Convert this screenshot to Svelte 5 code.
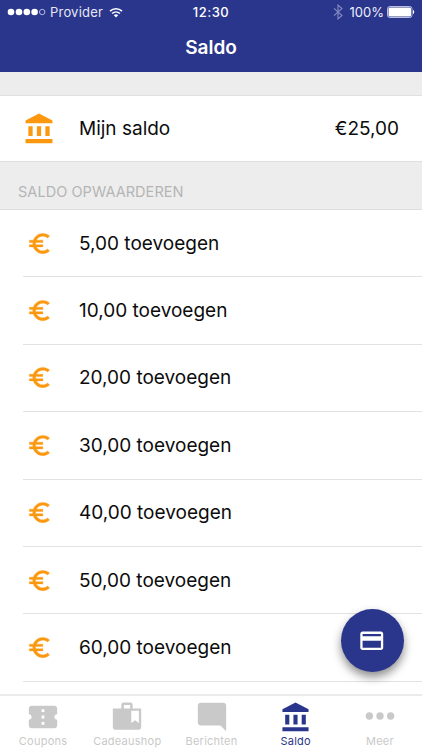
<script>
    let {
        balance = '€25,00',
        amounts = ['5,00', '10,00', '20,00', '30,00', '40,00', '50,00', '60,00'],
        activeTab = 'saldo',
    } = $props();

    const tabs = [
        { id: 'coupons', label: 'Coupons' },
        { id: 'shop', label: 'Cadeaushop' },
        { id: 'messages', label: 'Berichten' },
        { id: 'saldo', label: 'Saldo' },
        { id: 'more', label: 'Meer' },
    ];
</script>

{#snippet bank()}
    <svg class="bank" viewBox="0 0 24 24">
        <path d="M4.5 10v7h3v-7h-3zm6 0v7h3v-7h-3zM2.5 22h19v-3h-19v3zm14-12v7h3v-7h-3zM12 1L2.5 6v2h19V6L12 1z" />
    </svg>
{/snippet}

<div class="app">
    <header>
        <div class="status">
            <div class="carrier">
                <svg class="signal" viewBox="0 0 39 8">
                    {#each [4, 12, 19.8, 27.6] as x}
                        <circle cx={x} cy="4" r="3.3" fill="#fff" />
                    {/each}
                    <circle cx="35.2" cy="4" r="2.7" fill="none" stroke="#c3c6e6" stroke-width="0.9" />
                </svg>
                <span class="provider">Provider</span>
                <svg class="wifi" viewBox="0 0 14 11">
                    <path d="M1 4.1a8.7 8.7 0 0 1 12 0M3.1 6.5a5.7 5.7 0 0 1 7.8 0" fill="none" stroke="#fff" stroke-width="1.6" />
                    <path d="M4.8 8.2a3.3 3.3 0 0 1 4.4 0L7 10.6z" fill="#fff" />
                </svg>
            </div>
            <span class="clock">12:30</span>
            <div class="power">
                <svg class="bluetooth" viewBox="0 0 10 16">
                    <path d="M1 4.3l8 7.2-4 3.4V1.1l4 3.4-8 7.2" fill="none" stroke="#858bc2" stroke-width="1.1" />
                </svg>
                <span class="percent">100%</span>
                <svg class="battery" viewBox="0 0 28 12">
                    <rect x="0.5" y="0.5" width="24.5" height="11" rx="2.3" fill="none" stroke="#b9bde2" />
                    <rect x="1.5" y="1.5" width="22.5" height="9" rx="1.3" fill="#fff" />
                    <path d="M26 4c1.6.4 1.6 3.6 0 4z" fill="#fff" />
                </svg>
            </div>
        </div>
        <h1>Saldo</h1>
    </header>

    <main>
        <div class="spacer"></div>
        <div class="row balance">
            <span class="row-icon">{@render bank()}</span>
            <span class="row-label">Mijn saldo</span>
            <span class="value">{balance}</span>
        </div>
        <h2>SALDO OPWAARDEREN</h2>
        <ul>
            {#each amounts as amount (amount)}
                <li class="row">
                    <span class="row-icon">
                        <svg class="euro" viewBox="0 0 24 24">
                            <path d="M15 18.5c-2.51 0-4.68-1.42-5.76-3.5H15v-2H8.58c-.05-.33-.08-.66-.08-1s.03-.67.08-1H15V9H9.24C10.32 6.92 12.5 5.5 15 5.5c1.61 0 3.09.59 4.23 1.57L21 5.3C19.41 3.87 17.3 3 15 3c-3.92 0-7.24 2.51-8.48 6H3v2h3.06c-.04.33-.06.66-.06 1s.02.67.06 1H3v2h3.52c1.24 3.49 4.56 6 8.48 6 2.31 0 4.41-.87 6-2.3l-1.78-1.77c-1.13.98-2.6 1.57-4.22 1.57z" />
                        </svg>
                    </span>
                    <span class="row-label">{amount} toevoegen</span>
                </li>
            {/each}
        </ul>
    </main>

    <nav>
        {#each tabs as tab (tab.id)}
            <button class="tab" class:active={tab.id === activeTab}>
                <span class="tab-icon">
                    {#if tab.id === 'coupons'}
                        <svg viewBox="0 0 24 24">
                            <path d="M22 10V6c0-1.11-.9-2-2-2H4c-1.1 0-1.99.89-1.99 2v4c1.1 0 1.99.9 1.99 2s-.89 2-2 2v4c0 1.1.9 2 2 2h16c1.1 0 2-.9 2-2v-4c-1.1 0-2-.9-2-2s.9-2 2-2zm-9 7.5h-2v-2h2v2zm0-4.5h-2v-2h2v2zm0-4.5h-2v-2h2v2z" />
                        </svg>
                    {:else if tab.id === 'shop'}
                        <svg viewBox="0 0 24 24">
                            <path fill-rule="evenodd" d="M8 6V3.5C8 2.5 8.6 1.8 9.5 1.8h5c1 0 1.5.7 1.5 1.7V6h6v13.3c0 1-.7 1.7-1.7 1.7H3.700C2.700 21 2 20.300 2 19.300V6zM9.800 6h4.400V3.500H9.800zM15 7.500v8.700l2.700-1.900 2.700 1.900V7.500z" />
                        </svg>
                    {:else if tab.id === 'messages'}
                        <svg viewBox="0 0 24 24">
                            <path d="M21.990 4c0-1.100-.89-2-1.990-2H4c-1.100 0-2 .9-2 2v12c0 1.100.9 2 2 2h14l4 4-.01-18z" />
                        </svg>
                    {:else if tab.id === 'saldo'}
                        {@render bank()}
                    {:else}
                        <svg viewBox="0 0 24 24">
                            <circle cx="4.500" cy="11.300" r="2.600" />
                            <circle cx="12" cy="11.300" r="2.600" />
                            <circle cx="19.500" cy="11.300" r="2.600" />
                        </svg>
                    {/if}
                </span>
                <span class="tab-label">{tab.label}</span>
            </button>
        {/each}
    </nav>

    <button class="fab" aria-label="Betalen">
        <svg viewBox="0 0 24 24">
            <path d="M20 4H4c-1.110 0-1.990.89-1.990 2L2 18c0 1.110.89 2 2 2h16c1.110 0 2-.89 2-2V6c0-1.110-.89-2-2-2zm0 14H4v-6h16v6zm0-10H4V6h16v2z" />
        </svg>
    </button>
</div>

<style>
    :global(body) {
        margin: 0;
    }

    .app {
        position: relative;
        width: 422px;
        height: 750px;
        display: flex;
        flex-direction: column;
        overflow: hidden;
        background: #fff;
        color: #0c0c0c;
        font-family: Inter, "Liberation Sans", sans-serif;
    }

    svg {
        display: block;
        fill: currentColor;
    }

    button {
        border: none;
        padding: 0;
        background: none;
        font-family: inherit;
    }

    header {
        height: 72px;
        flex-shrink: 0;
        background: #2a368b;
        color: #fff;
    }

    .status {
        display: grid;
        grid-template-columns: 1fr auto 1fr;
        align-items: center;
        height: 24px;
        padding: 0 7px;
        font-size: 13px;
        line-height: 24px;
    }

    .carrier,
    .power {
        display: flex;
        align-items: center;
    }

    .power {
        justify-content: flex-end;
    }

    .signal {
        width: 39px;
        height: 8px;
    }

    .provider {
        margin-left: 4px;
        color: #e6e7f5;
        letter-spacing: 0.2px;
    }

    .wifi {
        width: 14px;
        height: 11px;
        margin-left: 6px;
    }

    .clock {
        font-weight: 500;
        letter-spacing: 0.5px;
    }

    .bluetooth {
        width: 10px;
        height: 16px;
        margin-right: 7px;
    }

    .percent {
        color: #eeeffa;
    }

    .battery {
        width: 28px;
        height: 12px;
        margin-left: 3px;
    }

    h1 {
        margin: 0;
        text-align: center;
        font-size: 19px;
        font-weight: 600;
        line-height: 47px;
    }

    main {
        flex: 1;
        min-height: 0;
        overflow: hidden;
    }

    .spacer {
        height: 23px;
        background: #ededed;
        border-bottom: 1px solid #e0e0e0;
    }

    .row {
        display: flex;
        align-items: center;
        box-sizing: border-box;
        height: 67.4px;
        margin-left: 23px;
        border-bottom: 1px solid #e2e2e2;
    }

    .balance {
        height: 65px;
        padding-right: 23px;
        border-bottom: none;
    }

    .row-icon {
        display: flex;
        justify-content: center;
        width: 32px;
        margin-right: 24px;
        color: #fb980f;
    }

    .row-icon .bank {
        width: 34px;
        height: 34px;
        flex-shrink: 0;
    }

    .euro {
        width: 27px;
        height: 27px;
        stroke: currentColor;
        stroke-width: 0.3;
    }

    .row-label,
    .value {
        font-size: 19px;
    }

    .row-label {
        flex: 1;
    }

    h2 {
        box-sizing: border-box;
        height: 49px;
        margin: 0;
        padding: 12px 18px 0;
        border-top: 1px solid #e0e0e0;
        border-bottom: 1px solid #dedede;
        background: #ededed;
        color: #b5b5b5;
        font-size: 14.5px;
        font-weight: 400;
        line-height: 35px;
        letter-spacing: 0.05px;
    }

    ul {
        list-style: none;
        margin: 0;
        padding: 0;
    }

    nav {
        display: flex;
        flex-shrink: 0;
        box-sizing: border-box;
        height: 56px;
        padding-left: 1px;
        border-top: 2px solid #ebebeb;
        background: #fff;
    }

    .tab {
        flex: 1;
        display: flex;
        flex-direction: column;
        align-items: center;
        padding-top: 4px;
        color: #c9c9c9;
    }

    .tab.active {
        color: #2a368b;
    }

    .tab-icon {
        display: flex;
        align-items: center;
        height: 34px;
    }

    .tab-icon svg {
        width: 34px;
        height: 34px;
    }

    .tab-icon .bank {
        width: 33px;
        height: 33px;
    }

    .tab-label {
        font-size: 11px;
        line-height: 14px;
        letter-spacing: 0.25px;
    }

    .fab {
        position: absolute;
        right: 18.5px;
        bottom: 78px;
        display: flex;
        align-items: center;
        justify-content: center;
        width: 63px;
        height: 63px;
        border-radius: 50%;
        background: #2a368b;
        color: #fff;
        box-shadow: 0 5px 10px rgba(0, 0, 0, 0.45);
    }

    .fab svg {
        width: 27.5px;
        height: 27.5px;
    }
</style>
